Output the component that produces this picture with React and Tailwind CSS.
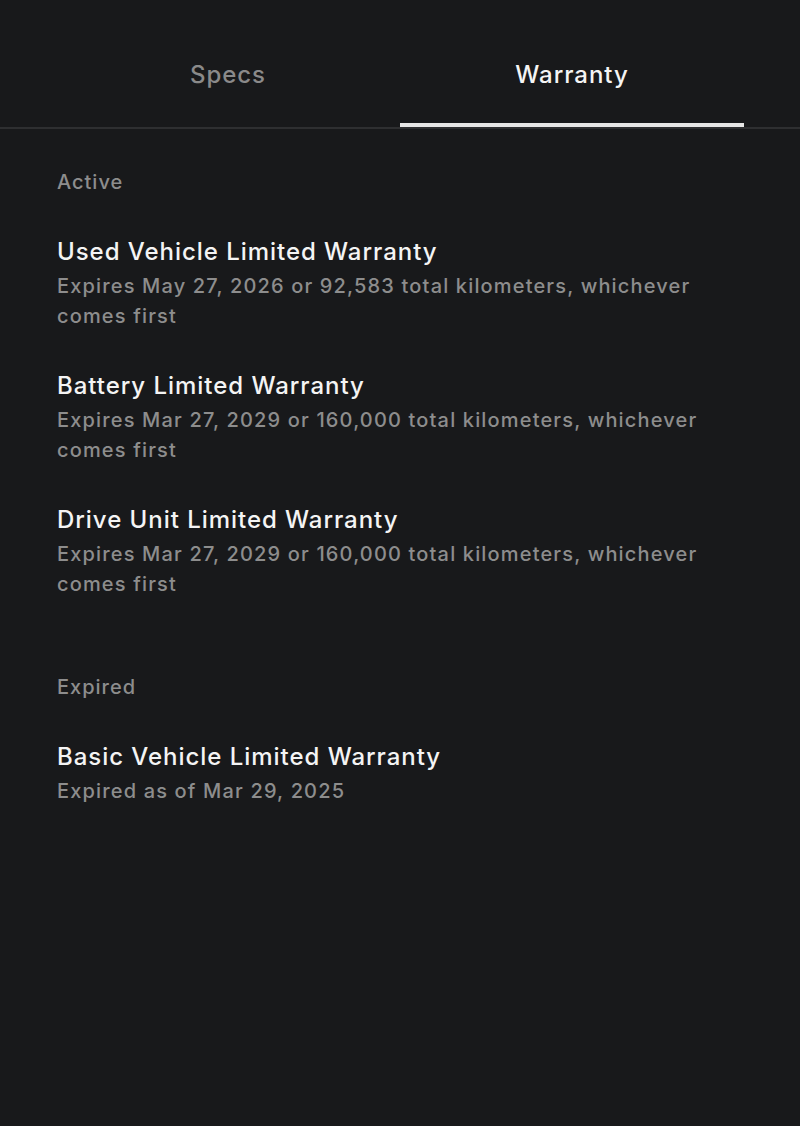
import React, { useState } from 'react';

const ACTIVE = [
  { title: 'Used Vehicle Limited Warranty', desc: 'Expires May 27, 2026 or 92,583 total kilometers, whichever comes first' },
  { title: 'Battery Limited Warranty', desc: 'Expires Mar 27, 2029 or 160,000 total kilometers, whichever comes first' },
  { title: 'Drive Unit Limited Warranty', desc: 'Expires Mar 27, 2029 or 160,000 total kilometers, whichever comes first' },
];

const EXPIRED = [
  { title: 'Basic Vehicle Limited Warranty', desc: 'Expired as of Mar 29, 2025' },
];

const WarrantyItem = ({ item }) => (
  <div>
    <h3 className="text-[24px] leading-[34px] font-medium tracking-[0.04em] text-[#f4f4f4]">{item.title}</h3>
    <p className="mt-[2px] text-[20px] leading-[30px] font-medium tracking-[0.058em] text-[#8d8d8d]">{item.desc}</p>
  </div>
);

const App = () => {
  const [tab, setTab] = useState('warranty');

  return (
    <div className="min-h-[1126px] w-full bg-[#18191b] font-['Inter','Noto_Sans',sans-serif] antialiased">
      {/* Tabs */}
      <div className="border-b-2 border-[#2e2f31]">
        <div className="flex px-[56px]">
          {[
            { id: 'specs', label: 'Specs' },
            { id: 'warranty', label: 'Warranty' },
          ].map((t) => (
            <button
              key={t.id}
              onClick={() => setTab(t.id)}
              className={`flex-1 h-[127px] pt-[59px] flex justify-center border-b-4 ${
                tab === t.id ? 'border-[#e6e6e6] text-[#f4f4f4]' : 'border-transparent text-[#8a8a8a]'
              }`}
            >
              <span className="text-[24px] leading-[32px] font-medium tracking-[0.04em]">{t.label}</span>
            </button>
          ))}
        </div>
      </div>

      {/* Content */}
      <div className="px-[57px] pt-[39px]">
        <h2 className="text-[20px] leading-[28px] font-medium tracking-[0.05em] text-[#8d8d8d]">Active</h2>
        <div className="mt-[39px] flex flex-col gap-[38px]">
          {ACTIVE.map((item, idx) => (
            <WarrantyItem key={idx} item={item} />
          ))}
        </div>

        <h2 className="mt-[74px] text-[20px] leading-[28px] font-medium tracking-[0.05em] text-[#8d8d8d]">Expired</h2>
        <div className="mt-[39px] flex flex-col gap-[38px]">
          {EXPIRED.map((item, idx) => (
            <WarrantyItem key={idx} item={item} />
          ))}
        </div>
      </div>
    </div>
  );
};

export default App;
